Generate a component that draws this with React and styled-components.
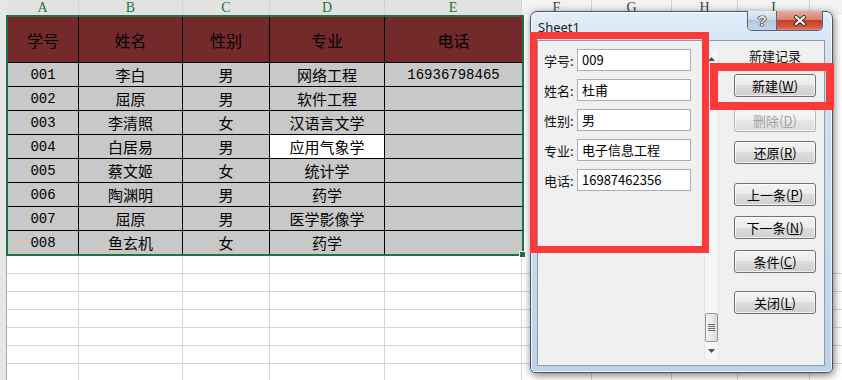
import React from "react";
import styled, { createGlobalStyle } from "styled-components";

const GlobalStyle = createGlobalStyle`
  html, body { margin: 0; padding: 0; }
  body {
    width: 842px;
    height: 380px;
    overflow: hidden;
    background: #fff;
    font-family: "Noto Sans CJK SC", sans-serif;
  }
`;

const COLS = [
  { key: "A", w: 72, sel: true },
  { key: "B", w: 104, sel: true },
  { key: "C", w: 87, sel: true },
  { key: "D", w: 115, sel: true },
  { key: "E", w: 137, sel: true },
  { key: "F", w: 70 },
  { key: "G", w: 80 },
  { key: "H", w: 66 },
  { key: "I", w: 72 },
];

// widths inside the green selection border (col A loses 1px to the border)
const TABLE_W = [71, 104, 87, 115, 137];

const HEAD = ["学号", "姓名", "性别", "专业", "电话"];
const ROWS = [
  ["001", "李白", "男", "网络工程", "16936798465"],
  ["002", "屈原", "男", "软件工程", ""],
  ["003", "李清照", "女", "汉语言文学", ""],
  ["004", "白居易", "男", "应用气象学", ""],
  ["005", "蔡文姬", "女", "统计学", ""],
  ["006", "陶渊明", "男", "药学", ""],
  ["007", "屈原", "男", "医学影像学", ""],
  ["008", "鱼玄机", "女", "药学", ""],
];

const FIELDS = [
  ["学号:", "009"],
  ["姓名:", "杜甫"],
  ["性别:", "男"],
  ["专业:", "电子信息工程"],
  ["电话:", "16987462356"],
];

const BUTTONS = [
  { text: "新建", key: "W", gap: 10 },
  { text: "删除", key: "D", gap: 12, disabled: true },
  { text: "还原", key: "R", gap: 9 },
  { text: "上一条", key: "P", gap: 19 },
  { text: "下一条", key: "N", gap: 10 },
  { text: "条件", key: "C", gap: 11 },
  { text: "关闭", key: "L", gap: 18 },
];

/* ---------- spreadsheet ---------- */

const Page = styled.div`
  position: relative;
  width: 842px;
  height: 380px;
  overflow: hidden;
`;

const ColBar = styled.div`
  display: flex;
  height: 15px;
  background: #f3f3f3;
`;

const Corner = styled.div`
  width: 7px;
  flex: none;
  background: #e6e6e6;
`;

const ColLabel = styled.div`
  flex: none;
  width: ${(p) => p.$w}px;
  box-sizing: border-box;
  border-right: 1px solid #d2d2d2;
  background: ${(p) => (p.$sel ? "#e2e2e2" : "#f3f3f3")};
  color: ${(p) => (p.$sel ? "#217346" : "#444")};
  font-family: "Liberation Serif", serif;
  font-size: 14px;
  line-height: 15px;
  text-align: center;
`;

const Main = styled.div`
  display: flex;
`;

const Gutter = styled.div`
  width: 6px;
  flex: none;
  height: 365px;
  background: #e6e6e6;
  border-right: 1px solid #a8a8a8;
`;

const Sheet = styled.div`
  flex: 1;
  display: flex;
  flex-direction: column;
`;

const Upper = styled.div`
  display: flex;
`;

const Selection = styled.div`
  position: relative;
  margin-left: -1px;
  border: 2px solid #217346;
  display: flex;
  flex-direction: column;
`;

const Handle = styled.div`
  position: absolute;
  right: -4px;
  bottom: -4px;
  width: 5px;
  height: 5px;
  background: #217346;
  border: 1px solid #fff;
`;

const TRow = styled.div`
  display: flex;
  height: ${(p) => p.$h}px;
`;

const Cell = styled.div`
  flex: none;
  width: ${(p) => p.$w}px;
  box-sizing: border-box;
  border-right: ${(p) => (p.$last ? "none" : "1px solid #000")};
  border-bottom: ${(p) => (p.$bottom ? "none" : "1px solid #000")};
  background: ${(p) => p.$bg};
  color: #000;
  display: flex;
  align-items: center;
  justify-content: center;
  font-family: ${(p) =>
    p.$num ? `"Liberation Mono", monospace` : `"Noto Sans CJK SC", sans-serif`};
  font-size: ${(p) => (p.$head ? 16 : p.$num ? 14 : 15)}px;
  line-height: 1;
  white-space: nowrap;
`;

const Filler = styled.div`
  flex: 1;
  background: #fff;
`;

const EmptyRow = styled.div`
  display: flex;
  height: 18px;
  box-sizing: border-box;
  border-bottom: 1px solid #d4d4d4;
  &:first-child {
    height: 16px;
  }
`;

const EmptyCell = styled.div`
  flex: none;
  width: ${(p) => p.$w}px;
  box-sizing: border-box;
  border-right: 1px solid #d4d4d4;
`;

/* ---------- dialog ---------- */

const Dialog = styled.div`
  position: absolute;
  left: 530px;
  top: 11px;
  width: 303px;
  height: 362px;
  box-sizing: border-box;
  border: 1px solid #4a5463;
  border-radius: 7px 7px 5px 5px;
  background: linear-gradient(#e3edf8, #d2e2f3 12%, #c6daef 60%, #bcd3ec);
  box-shadow: 1px 2px 8px rgba(0, 0, 0, 0.55),
    inset 0 0 0 1px rgba(255, 255, 255, 0.75);
  display: flex;
  flex-direction: column;
  padding: 0 7px 6px 6px;
`;

const TitleBar = styled.div`
  display: flex;
  height: 28px;
  align-items: center;
`;

const Title = styled.div`
  font-family: "Noto Sans", sans-serif;
  font-size: 13px;
  color: #1e1e1e;
  padding-left: 1px;
  padding-top: 2px;
`;

const CaptionButtons = styled.div`
  margin-left: auto;
  margin-right: 2px;
  align-self: flex-start;
  margin-top: -1px;
  display: flex;
  height: 19px;
  border: 1px solid #55657a;
  border-top: none;
  border-radius: 0 0 5px 5px;
  overflow: hidden;
`;

const HelpButton = styled.div`
  width: 28px;
  border-right: 1px solid #55657a;
  background: linear-gradient(#e6edf5, #ccd9e7 45%, #b3c6dc 50%, #c4d5e8);
  display: flex;
  align-items: center;
  justify-content: center;
  font-family: "Liberation Sans", sans-serif;
  font-weight: bold;
  font-size: 15px;
  color: #e9e9e9;
  text-shadow: 0 0 1px #111, 0 0 1px #111, 0 0 1px #111, 0 0 1px #111;
`;

const CloseButton = styled.div`
  width: 45px;
  background: linear-gradient(#e9aa9c, #db8372 45%, #c4402d 50%, #cf5a3f 85%, #e08b6c);
  display: flex;
  align-items: center;
  justify-content: center;
`;

const Client = styled.div`
  flex: 1;
  display: flex;
  background: #f0f0f0;
  border: 1px solid #8a9bb0;
`;

const FieldsPanel = styled.div`
  width: 166px;
  flex: none;
  box-sizing: border-box;
  padding: 8px 0 0 6px;
`;

const FieldRow = styled.div`
  display: flex;
  align-items: center;
  height: 22px;
  margin-bottom: 8px;
`;

const FieldLabel = styled.span`
  width: 33px;
  font-size: 13px;
  color: #111;
`;

const FieldInput = styled.div`
  width: 114px;
  height: 22px;
  box-sizing: border-box;
  border: 1px solid #abadb3;
  background: #fff;
  padding-left: 4px;
  font-size: 13px;
  line-height: 20px;
  color: #000;
`;

const ScrollBar = styled.div`
  width: 15px;
  flex: none;
  margin: 9px 0 6px;
  background: #f6f6f6;
  border-left: 1px solid #e6e6e6;
  border-right: 1px solid #e6e6e6;
  box-sizing: border-box;
  display: flex;
  flex-direction: column;
  align-items: center;
`;

const Arrow = styled.div`
  height: 17px;
  display: flex;
  align-items: center;
  justify-content: center;
`;

const Track = styled.div`
  flex: 1;
`;

const Thumb = styled.div`
  width: 13px;
  height: 29px;
  box-sizing: border-box;
  border: 1px solid #979797;
  border-radius: 2px;
  background: linear-gradient(90deg, #f3f3f3, #e9e9e9 50%, #d8d8d8);
  display: flex;
  align-items: center;
  justify-content: center;
`;

const ButtonsPanel = styled.div`
  flex: 1;
  display: flex;
  flex-direction: column;
  padding: 6px 0 0 15px;
`;

const PanelLabel = styled.div`
  width: 82px;
  text-align: center;
  font-size: 13px;
  line-height: 17px;
  color: #111;
`;

const Button = styled.div`
  width: 82px;
  height: 23px;
  margin-top: ${(p) => p.$gap}px;
  box-sizing: border-box;
  border: 1px solid ${(p) => (p.$disabled ? "#b0b4b8" : "#707070")};
  border-radius: 3px;
  background: ${(p) =>
    p.$disabled
      ? "linear-gradient(#f6f6f6, #efefef 50%, #e6e6e6 50%, #dedede)"
      : "linear-gradient(#f3f3f3, #ebebeb 50%, #dddddd 50%, #cfcfcf)"};
  box-shadow: inset 0 0 0 1px rgba(255, 255, 255, 0.7);
  color: ${(p) => (p.$disabled ? "#a3a3a3" : "#000")};
  font-size: 13px;
  line-height: 21px;
  text-align: center;
`;

const Mark = styled.div`
  position: absolute;
  box-sizing: border-box;
  border: ${(p) => p.$t}px solid #fb3a3a;
  pointer-events: none;
`;

const BigMark = styled(Mark)`
  left: -1px;
  top: 20px;
  width: 179px;
  height: 221px;
`;

const SmallMark = styled(Mark)`
  left: 179px;
  top: 51px;
  width: 124px;
  height: 47px;
`;

function Spreadsheet() {
  return (
    <>
      <ColBar>
        <Corner />
        {COLS.map((c) => (
          <ColLabel key={c.key} $w={c.w} $sel={c.sel}>
            {c.key}
          </ColLabel>
        ))}
      </ColBar>
      <Main>
        <Gutter />
        <Sheet>
          <Upper>
            <Selection>
              <TRow $h={46}>
                {HEAD.map((h, i) => (
                  <Cell key={h} $w={TABLE_W[i]} $head $last={i === 4} $bg="#742a2a">
                    {h}
                  </Cell>
                ))}
              </TRow>
              {ROWS.map((r, ri) => (
                <TRow key={ri} $h={ri === ROWS.length - 1 ? 23 : 24}>
                  {r.map((v, i) => (
                    <Cell
                      key={i}
                      $w={TABLE_W[i]}
                      $last={i === 4}
                      $bottom={ri === ROWS.length - 1}
                      $num={i === 0 || i === 4}
                      $bg={ri === 3 && i === 3 ? "#fff" : "#c8c8c8"}
                    >
                      {v}
                    </Cell>
                  ))}
                </TRow>
              ))}
              <Handle />
            </Selection>
            <Filler />
          </Upper>
          {Array.from({ length: 7 }).map((_, ri) => (
            <EmptyRow key={ri}>
              {COLS.map((c) => (
                <EmptyCell key={c.key} $w={c.w} />
              ))}
            </EmptyRow>
          ))}
        </Sheet>
      </Main>
    </>
  );
}

function RecordDialog() {
  return (
    <Dialog>
      <TitleBar>
        <Title>Sheet1</Title>
        <CaptionButtons>
          <HelpButton>?</HelpButton>
          <CloseButton>
            <svg width="14" height="11" viewBox="0 0 14 11">
              <path d="M3 2 L11 9 M11 2 L3 9" stroke="#3a2a28" strokeWidth="4" strokeLinecap="round" />
              <path d="M3 2 L11 9 M11 2 L3 9" stroke="#fff" strokeWidth="2.2" strokeLinecap="round" />
            </svg>
          </CloseButton>
        </CaptionButtons>
      </TitleBar>
      <Client>
        <FieldsPanel>
          {FIELDS.map(([l, v]) => (
            <FieldRow key={l}>
              <FieldLabel>{l}</FieldLabel>
              <FieldInput>{v}</FieldInput>
            </FieldRow>
          ))}
        </FieldsPanel>
        <ScrollBar>
          <Arrow>
            <svg width="7" height="4" viewBox="0 0 7 4">
              <path d="M0 4 L3.5 0 L7 4 Z" fill="#4d4d4d" />
            </svg>
          </Arrow>
          <Track />
          <Thumb>
            <svg width="7" height="7" viewBox="0 0 7 7">
              <path d="M0 0.5 H7 M0 2.5 H7 M0 4.5 H7 M0 6.5 H7" stroke="#6b6b6b" strokeWidth="1" />
            </svg>
          </Thumb>
          <Arrow>
            <svg width="7" height="4" viewBox="0 0 7 4">
              <path d="M0 0 L7 0 L3.5 4 Z" fill="#4d4d4d" />
            </svg>
          </Arrow>
        </ScrollBar>
        <ButtonsPanel>
          <PanelLabel>新建记录</PanelLabel>
          {BUTTONS.map((b) => (
            <Button key={b.key} $gap={b.gap} $disabled={b.disabled}>
              {b.text}(<u>{b.key}</u>)
            </Button>
          ))}
        </ButtonsPanel>
      </Client>
      <BigMark $t={7} />
      <SmallMark $t={8} />
    </Dialog>
  );
}

export default function App() {
  return (
    <Page>
      <GlobalStyle />
      <Spreadsheet />
      <RecordDialog />
    </Page>
  );
}
